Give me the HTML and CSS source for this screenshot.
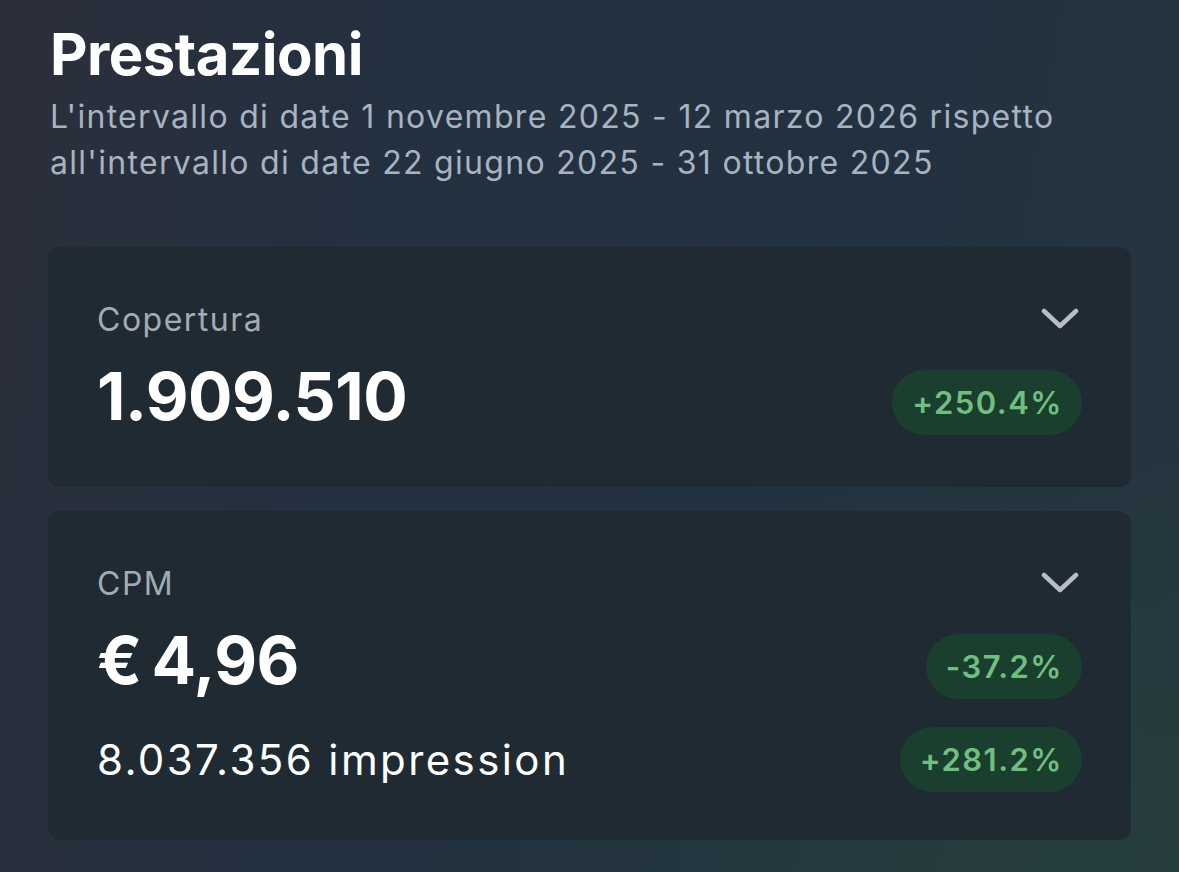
FILE: index.html
```html
<!DOCTYPE html>
<html lang="it">
<head>
<meta charset="utf-8">
<title>Prestazioni</title>
<link rel="stylesheet" href="styles.css">
</head>
<body>
<main class="page">
  <header class="head">
    <h1 class="title">Prestazioni</h1>
    <p class="sub">L'intervallo di date 1 novembre 2025 - 12 marzo 2026 rispetto all'intervallo di date 22 giugno 2025 - 31 ottobre 2025</p>
  </header>

  <section class="card">
    <div class="row top">
      <span class="label">Copertura</span>
      <svg class="chev" width="38" height="24" viewBox="0 0 38 24"><path d="M3 4 L19 19 L35 4" fill="none" stroke="#b9bec4" stroke-width="4.5" stroke-linecap="round" stroke-linejoin="round"/></svg>
    </div>
    <div class="row">
      <span class="value">1.909.510</span>
      <span class="pill">+250.4%</span>
    </div>
  </section>

  <section class="card card-multi">
    <div class="row top">
      <span class="label">CPM</span>
      <svg class="chev" width="38" height="24" viewBox="0 0 38 24"><path d="M3 4 L19 19 L35 4" fill="none" stroke="#b9bec4" stroke-width="4.5" stroke-linecap="round" stroke-linejoin="round"/></svg>
    </div>
    <div class="row">
      <span class="value">€&#8201;4,96</span>
      <span class="pill">-37.2%</span>
    </div>
    <div class="row second">
      <span class="secondary">8.037.356 impression</span>
      <span class="pill">+281.2%</span>
    </div>
  </section>
</main>
</body>
</html>
```

FILE: styles.css
```css
html, body {
  margin: 0;
  padding: 0;
  height: 100%;
}
body {
  width: 1179px;
  height: 872px;
  overflow: hidden;
  font-family: Inter, "Noto Sans", sans-serif;
  color: #fff;
  background:
    radial-gradient(ellipse 700px 500px at 1100px 900px, rgba(40,68,60,0.65), rgba(40,68,60,0) 100%),
    linear-gradient(100deg, #2c2f3b 0%, #23303f 30%, #223140 65%, #25353f 100%);
}
.page {
  padding: 18px 48px 0 48px;
  display: flex;
  flex-direction: column;
}
.head {
  padding-left: 2px;
  margin-bottom: 61px;
}
.title {
  margin: 0;
  font-size: 58px;
  font-weight: 700;
  line-height: 72px;
  letter-spacing: -0.5px;
}
.sub {
  margin: 0;
  margin-top: 4px;
  font-size: 32px;
  line-height: 46px;
  letter-spacing: 1.3px;
  color: #a8b3c0;
  width: 1080px;
}
.card {
  background: #1f2a33;
  border-radius: 12px;
  padding: 50px 49px 52px 49px;
  margin-bottom: 24px;
  display: flex;
  flex-direction: column;
}
.card-multi {
  padding-bottom: 48px;
}
.row {
  display: flex;
  align-items: center;
  justify-content: space-between;
}
.row.top {
  height: 44px;
  margin-bottom: 29px;
}
.label {
  font-size: 32px;
  letter-spacing: 1.5px;
  color: #a1acb7;
}
.chev {
  margin-right: 3px;
}
.value {
  font-size: 66px;
  font-weight: 700;
  line-height: 65px;
  padding-bottom: 6px;
  margin-top: -6px;
  letter-spacing: -0.5px;
}
.row.second {
  margin-top: 28px;
}
.secondary {
  font-size: 42px;
  line-height: 65px;
  letter-spacing: 2.4px;
}
.pill {
  background: #1a3f2e;
  color: #71bf80;
  font-size: 31px;
  font-weight: 600;
  letter-spacing: 1.5px;
  height: 65px;
  line-height: 65px;
  padding: 0 19px 0 20px;
  border-radius: 33px;
}
```
